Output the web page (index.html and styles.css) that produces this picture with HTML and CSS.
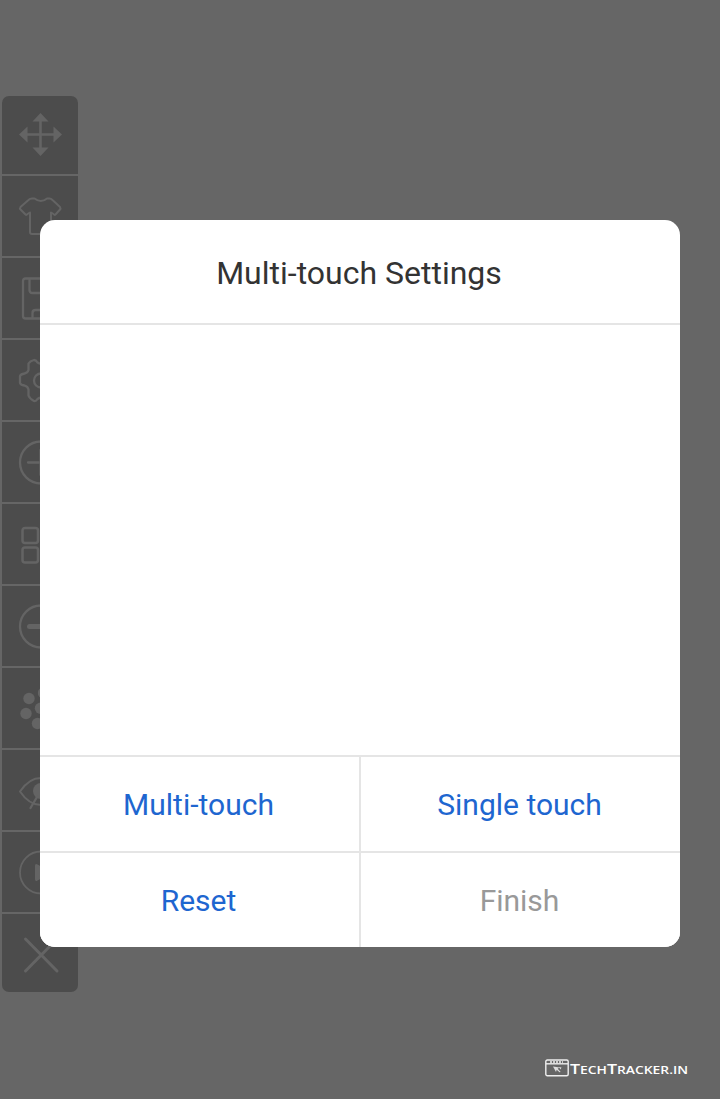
FILE: index.html
```html
<!DOCTYPE html>
<html lang="en">
<head>
<meta charset="utf-8">
<title>Multi-touch Settings</title>
<link rel="stylesheet" href="styles.css">
</head>
<body>
<main class="screen">
  <nav class="toolbar">
    <div class="tool"><svg class="icon" viewBox="0 0 44 44"><path d="M22.500 6v31M7 21.500h31" stroke-width="2.600"/><path class="solid" d="M22.500 0l8 8.500h-16zM22.500 43l8-8.500h-16zM1 21.500L9.500 13.500v16zM44 21.500L35.500 13.500v16z"/></svg></div>
    <div class="tool"><svg class="icon" viewBox="0 0 44 44"><path d="M14 4.500h2.500q6.500 5 12.500 0h2.500q1.500 0 3 1.500l7.500 7q1 1.500 0 2.500l-4.500 5q-1 1-2-.5L33 18.500V38q0 2-2 2H14q-2 0-2-2V18.500L9.500 20q-1 1.500-2 .5l-5-5q-1-1 0-2.500l8-7q1.500-1.500 3.500-1.500z" stroke-width="2"/></svg></div>
    <div class="tool"><svg class="icon" viewBox="0 0 44 44"><path d="M7.500 2.500H34l6 6V40q0 2.500-2.500 2.500h-30Q5 42.500 5 40V5q0-2.500 2.500-2.500zM11.500 3v11q0 3 3 3h15q3 0 3-3V3M14.500 42v-5q0-3 3-3h10q3 0 3 3v5"/></svg></div>
    <div class="tool"><svg class="icon" viewBox="0 0 44 44"><path d="M16 2q-4 1-5.500 3.500v6.500q-1 3-4 3.500-3.500.5-4.500 2.500v7q.5 2 4.500 2.500 3.500 1 4 4v6q1 3 5.500 5.500 2 .5 3.500-2 3.500-2.500 7 0 1.500 2.500 3.500 2 4.500-2.500 5.500-5.500v-6q.5-3 4-4 4-.5 4-2.500v-7q-.5-2-4-2.500-3-.5-4-3.500V5.500Q34 3 30 2q-2 0-3.500 2.500-3.500 2.500-7 0Q18 2 16 2z"/><circle cx="23" cy="22.500" r="7"/></svg></div>
    <div class="tool"><svg class="icon" viewBox="0 0 44 44"><circle cx="23" cy="22.500" r="21"/><path d="M10 22.500h25M22.500 10v25"/></svg></div>
    <div class="tool"><svg class="icon" viewBox="0 0 44 44"><g stroke-width="2.500"><rect x="4.500" y="5.900" width="15.500" height="15" rx="2.500"/><rect x="4.500" y="25.400" width="15.500" height="15" rx="2.500"/><rect x="25" y="5.900" width="15" height="15" rx="2.500"/><rect x="25" y="25.400" width="15" height="15" rx="2.500"/></g></svg></div>
    <div class="tool"><svg class="icon" viewBox="0 0 44 44"><circle cx="23" cy="22.500" r="21"/><path d="M11.500 22.500h23" stroke-width="5"/></svg></div>
    <div class="tool"><svg class="icon" viewBox="0 0 44 44"><g class="solid"><circle cx="11" cy="12.500" r="5.700"/><circle cx="8" cy="27.500" r="5.700"/><circle cx="19.500" cy="37.500" r="5.700"/><circle cx="22.500" cy="22.300" r="5.700"/><circle cx="25.500" cy="7" r="5.700"/><circle cx="34" cy="32" r="5.700"/><circle cx="37" cy="17" r="5.700"/></g></svg></div>
    <div class="tool"><svg class="icon" viewBox="0 0 44 44"><path d="M2 23.500Q11 10 23 10t21 13.500Q35 37 23 37T2 23.500z" stroke-width="2"/><circle class="solid" cx="23" cy="23" r="8"/><path d="M12.500 40l6.500-11"/></svg></div>
    <div class="tool"><svg class="icon" viewBox="0 0 44 44"><circle cx="23" cy="22.500" r="21" stroke-width="1.800"/><path class="solid" d="M17 16q0-3 2.500-1.500l12 6.500q2 1.500 0 3l-12 6.500q-2.500 1.500-2.500-1.500z"/></svg></div>
    <div class="tool"><svg class="icon" viewBox="0 0 44 44"><path d="M7.500 8l31.500 32M39 8L7.500 40" stroke-width="3"/></svg></div>
  </nav>

  <section class="dialog" role="dialog" aria-labelledby="title">
    <h1 class="title" id="title">Multi-touch Settings</h1>
    <div class="touch-area"></div>
    <div class="actions">
      <button class="action">Multi-touch</button>
      <button class="action">Single touch</button>
      <button class="action">Reset</button>
      <button class="action disabled">Finish</button>
    </div>
  </section>

  <footer class="brand">
    <svg class="brand-mark" viewBox="0 0 24 18"><rect x=".8" y="1" width="22.400" height="15.800" rx="1.500"/><path d="M1 4.800h22"/><path d="M5 3h13" stroke-dasharray="2 1"/><path class="cursor" d="M8 7.500l6.500 1-1.800 1.300 3 3.200-1.200.3-2.800-2.600-.7 2.300zM14 8l2.500.5-1 2z"/></svg>
    <svg class="brand-name" viewBox="0 0 120 18"><text x="1" y="15" textLength="118" lengthAdjust="spacingAndGlyphs"><tspan class="cap">T</tspan>ECH<tspan class="cap">T</tspan>RACKER.IN</text></svg>
  </footer>
</main>
</body>
</html>
```
FILE: styles.css
```css
* {
  box-sizing: border-box;
}

body {
  margin: 0;
  background: #666;
  font-family: Roboto, "Liberation Sans", sans-serif;
}

.screen {
  position: relative;
  height: 1099px;
  overflow: hidden;
  padding: 96px 2px 0;
}

.toolbar {
  display: flex;
  flex-direction: column;
  gap: 2px;
  width: 76px;
  height: 896px;
  border-radius: 7px;
  overflow: hidden;
}

.tool {
  display: flex;
  flex: none;
  align-items: center;
  justify-content: center;
  height: 80px;
  background: #4c4c4c;
}

.tool:first-child,
.tool:last-child {
  height: 78px;
}

.icon {
  width: 44px;
  height: 44px;
  overflow: visible;
  fill: none;
  stroke: #646464;
  stroke-width: 2.3;
  stroke-linecap: round;
  stroke-linejoin: round;
}

.icon .solid {
  fill: #646464;
  stroke: none;
}

/* Modal lies over the toolbar */
.dialog {
  position: absolute;
  top: 220px;
  left: 40px;
  display: flex;
  flex-direction: column;
  width: 640px;
  height: 727px;
  border-radius: 15px;
  overflow: hidden;
  background: #fff;
}

.title {
  height: 105px;
  margin: 0;
  padding-right: 2px;
  border-bottom: 2px solid #e5e5e5;
  color: #333;
  font-size: 32px;
  font-weight: 400;
  line-height: 106px;
  text-align: center;
}

.touch-area {
  flex: 1;
}

.actions {
  display: grid;
  grid-template-columns: 319px 319px;
  grid-template-rows: 94px 94px;
  gap: 2px;
  padding-top: 2px;
  background: #e5e5e5;
}

.action {
  padding: 2px 2px 0 0;
  border: 0;
  background: #fff;
  color: #1e66d0;
  font: 400 30px/36px Roboto, "Liberation Sans", sans-serif;
}

.disabled {
  color: #999;
}

.brand {
  position: absolute;
  right: 31px;
  bottom: 22px;
  display: flex;
}

.brand-mark {
  width: 24px;
  height: 18px;
  fill: none;
  stroke: #eee;
  stroke-width: 1.4;
}

.cursor {
  fill: #ddd;
  stroke: none;
}

.brand-name {
  width: 120px;
  height: 18px;
  fill: #fff;
  font: 600 10.5px "Open Sans", Lato, sans-serif;
}

.cap {
  font-size: 13.5px;
}
```
